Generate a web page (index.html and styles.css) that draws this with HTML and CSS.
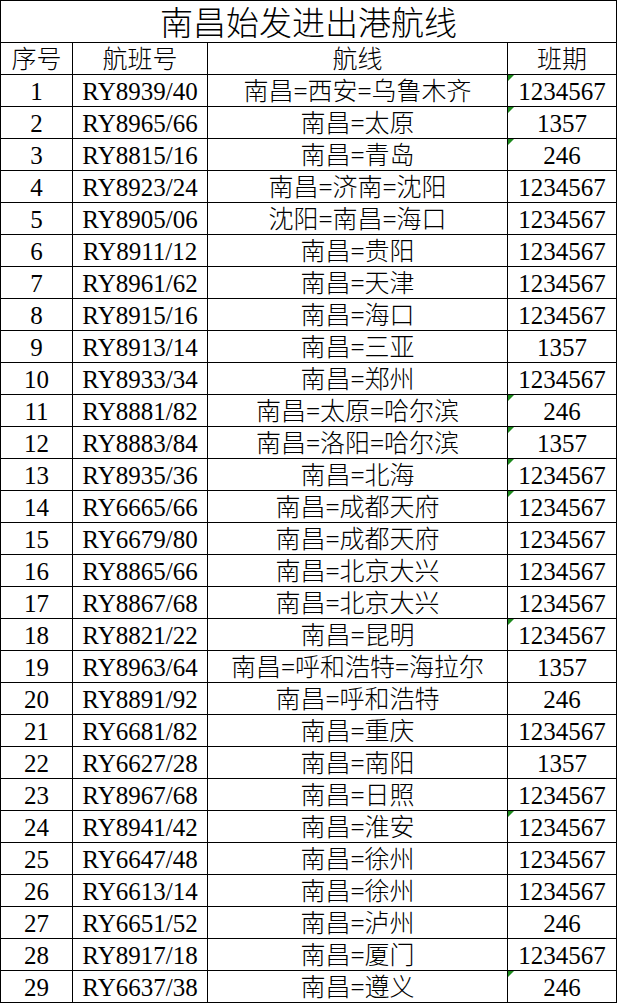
FILE: index.html
```html
<!DOCTYPE html>
<html lang="zh-CN">
<head>
<meta charset="utf-8">
<title>南昌始发进出港航线</title>
<link rel="stylesheet" href="styles.css">
</head>
<body>
<div class="sheet">
  <div class="cell title">南昌始发进出港航线</div>
  <div class="cell">序号</div><div class="cell">航班号</div><div class="cell">航线</div><div class="cell">班期</div>
  <div class="cell">1</div><div class="cell">RY8939/40</div><div class="cell">南昌=西安=乌鲁木齐</div><div class="cell mark">1234567</div>
  <div class="cell">2</div><div class="cell">RY8965/66</div><div class="cell">南昌=太原</div><div class="cell mark">1357</div>
  <div class="cell">3</div><div class="cell">RY8815/16</div><div class="cell">南昌=青岛</div><div class="cell mark">246</div>
  <div class="cell">4</div><div class="cell">RY8923/24</div><div class="cell">南昌=济南=沈阳</div><div class="cell">1234567</div>
  <div class="cell">5</div><div class="cell">RY8905/06</div><div class="cell">沈阳=南昌=海口</div><div class="cell">1234567</div>
  <div class="cell">6</div><div class="cell">RY8911/12</div><div class="cell">南昌=贵阳</div><div class="cell">1234567</div>
  <div class="cell">7</div><div class="cell">RY8961/62</div><div class="cell">南昌=天津</div><div class="cell">1234567</div>
  <div class="cell">8</div><div class="cell">RY8915/16</div><div class="cell">南昌=海口</div><div class="cell">1234567</div>
  <div class="cell">9</div><div class="cell">RY8913/14</div><div class="cell">南昌=三亚</div><div class="cell">1357</div>
  <div class="cell">10</div><div class="cell">RY8933/34</div><div class="cell">南昌=郑州</div><div class="cell">1234567</div>
  <div class="cell">11</div><div class="cell">RY8881/82</div><div class="cell">南昌=太原=哈尔滨</div><div class="cell mark">246</div>
  <div class="cell">12</div><div class="cell">RY8883/84</div><div class="cell">南昌=洛阳=哈尔滨</div><div class="cell mark">1357</div>
  <div class="cell">13</div><div class="cell">RY8935/36</div><div class="cell">南昌=北海</div><div class="cell mark">1234567</div>
  <div class="cell">14</div><div class="cell">RY6665/66</div><div class="cell">南昌=成都天府</div><div class="cell mark">1234567</div>
  <div class="cell">15</div><div class="cell">RY6679/80</div><div class="cell">南昌=成都天府</div><div class="cell">1234567</div>
  <div class="cell">16</div><div class="cell">RY8865/66</div><div class="cell">南昌=北京大兴</div><div class="cell">1234567</div>
  <div class="cell">17</div><div class="cell">RY8867/68</div><div class="cell">南昌=北京大兴</div><div class="cell">1234567</div>
  <div class="cell">18</div><div class="cell">RY8821/22</div><div class="cell">南昌=昆明</div><div class="cell mark">1234567</div>
  <div class="cell">19</div><div class="cell">RY8963/64</div><div class="cell">南昌=呼和浩特=海拉尔</div><div class="cell">1357</div>
  <div class="cell">20</div><div class="cell">RY8891/92</div><div class="cell">南昌=呼和浩特</div><div class="cell">246</div>
  <div class="cell">21</div><div class="cell">RY6681/82</div><div class="cell">南昌=重庆</div><div class="cell">1234567</div>
  <div class="cell">22</div><div class="cell">RY6627/28</div><div class="cell">南昌=南阳</div><div class="cell">1357</div>
  <div class="cell">23</div><div class="cell">RY8967/68</div><div class="cell">南昌=日照</div><div class="cell">1234567</div>
  <div class="cell">24</div><div class="cell">RY8941/42</div><div class="cell">南昌=淮安</div><div class="cell mark">1234567</div>
  <div class="cell">25</div><div class="cell">RY6647/48</div><div class="cell">南昌=徐州</div><div class="cell">1234567</div>
  <div class="cell">26</div><div class="cell">RY6613/14</div><div class="cell">南昌=徐州</div><div class="cell">1234567</div>
  <div class="cell">27</div><div class="cell">RY6651/52</div><div class="cell">南昌=泸州</div><div class="cell">246</div>
  <div class="cell">28</div><div class="cell">RY8917/18</div><div class="cell">南昌=厦门</div><div class="cell">1234567</div>
  <div class="cell">29</div><div class="cell">RY6637/38</div><div class="cell">南昌=遵义</div><div class="cell mark">246</div>
</div>
</body>
</html>
```
FILE: styles.css
```css
html, body {
  margin: 0;
  padding: 0;
  background: #ffffff;
}

.sheet {
  width: 617px;
  box-sizing: border-box;
  display: grid;
  grid-template-columns: 71px 134px 299px 108px;
  grid-template-rows: 41px repeat(30, 31px);
  gap: 1px;
  padding: 1px;
  background: #000000;
  font-family: "Liberation Serif", "Noto Sans CJK SC", serif;
  font-size: 25px;
  font-weight: 300;
  color: #000000;
}

.cell {
  position: relative;
  background: #ffffff;
  display: flex;
  align-items: center;
  justify-content: center;
  line-height: 1;
  white-space: nowrap;
  padding-top: 1px;
}

.title {
  grid-column: 1 / -1;
  font-size: 33px;
  padding-top: 5px;
}

.mark::before {
  content: "";
  position: absolute;
  left: 0;
  top: 0;
  width: 0;
  height: 0;
  border-top: 6px solid #1d8a1d;
  border-right: 6px solid transparent;
}
```
